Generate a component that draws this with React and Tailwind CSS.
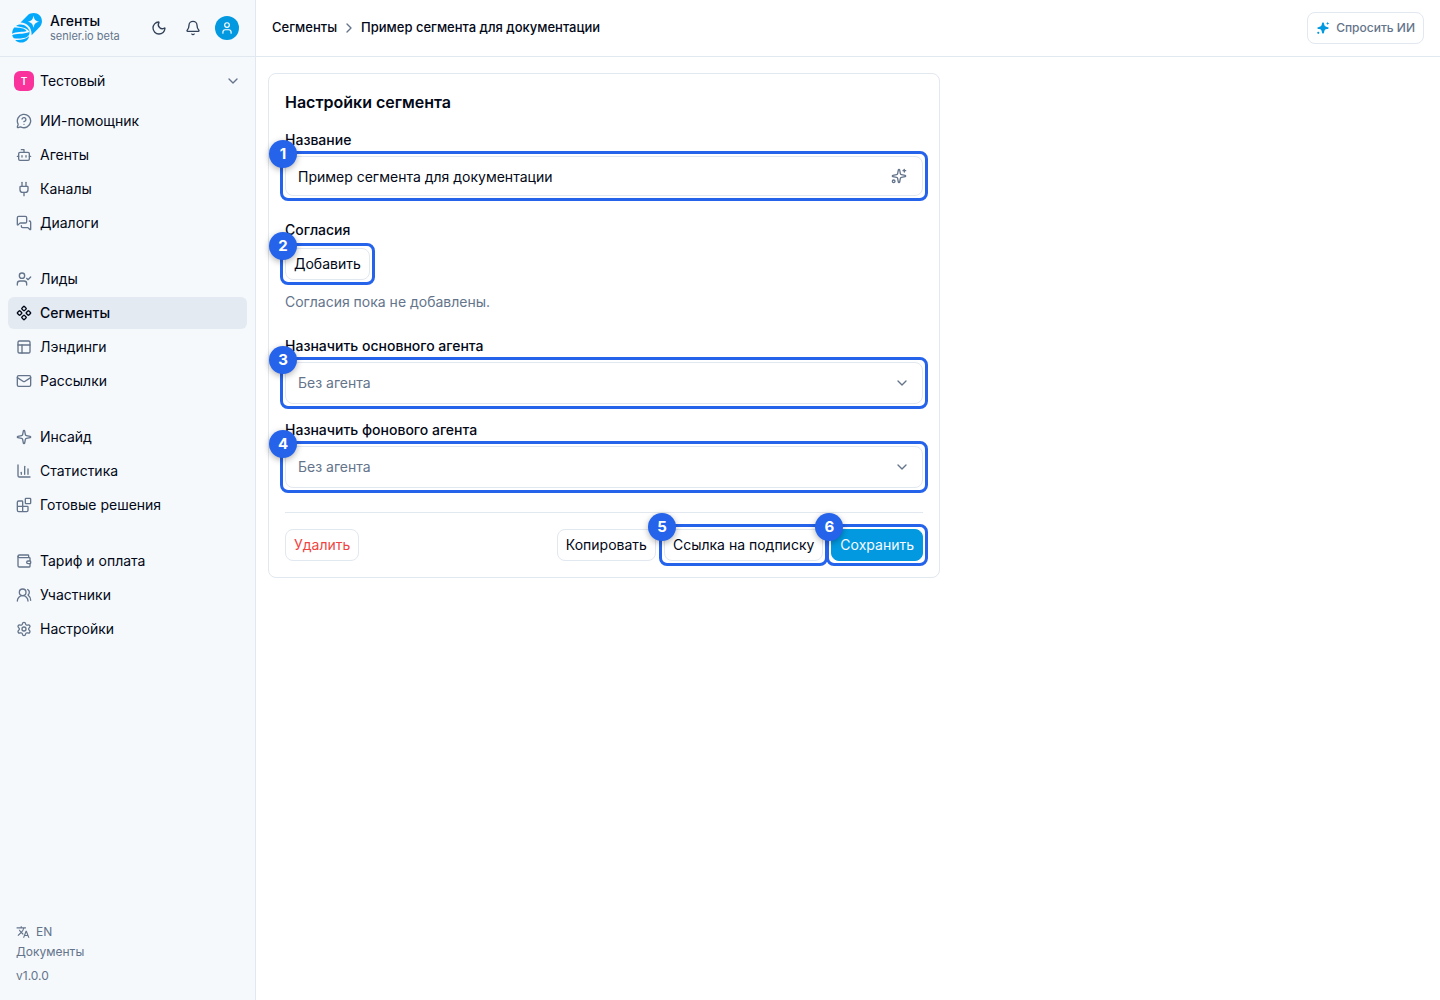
import { useState } from "react";
import {
  Bell,
  Blocks,
  Bot,
  ChartColumn,
  ChevronDown,
  ChevronRight,
  Component,
  Mail,
  MessageCircleQuestionMark,
  MessagesSquare,
  Moon,
  PanelsTopLeft,
  Plug,
  Settings,
  Sparkle,
  Sparkles,
  User,
  UserCheck,
  UsersRound,
  Wallet,
} from "lucide-react";
import { MdTranslate } from "react-icons/md";
import clsx from "clsx";

const menu = [
  [
    { title: "ИИ-помощник", icon: MessageCircleQuestionMark },
    { title: "Агенты", icon: Bot },
    { title: "Каналы", icon: Plug },
    { title: "Диалоги", icon: MessagesSquare },
  ],
  [
    { title: "Лиды", icon: UserCheck },
    { title: "Сегменты", icon: Component, active: true },
    { title: "Лэндинги", icon: PanelsTopLeft },
    { title: "Рассылки", icon: Mail },
  ],
  [
    { title: "Инсайд", icon: Sparkle },
    { title: "Статистика", icon: ChartColumn },
    { title: "Готовые решения", icon: Blocks },
  ],
  [
    { title: "Тариф и оплата", icon: Wallet },
    { title: "Участники", icon: UsersRound },
    { title: "Настройки", icon: Settings },
  ],
];

function Logo() {
  return (
    <svg viewBox="0 0 30 30" className="size-[30px] shrink-0" aria-hidden="true">
      <path
        fill="#05a9fc"
        d="M8.500 9.500 15.500 2.500C18.500-.5 24.500-.8 27.500 2.300c3.300 3.300 3.200 8.700.2 11.800L19.600 22.300C20 14.500 15.500 10 8.500 9.500Z"
      />
      <path
        fill="#f5f9fc"
        d="M21.500 2.800c.8 4 2 5.200 5.800 6-3.800.8-5 2-5.800 6-.8-4-2-5.200-5.800-6 3.800-.8 5-2 5.800-6Z"
      />
      <path fill="#05a9fc" d="M4 12.900C9.500 9.300 16.500 12.800 18 19.300c-2.600-4.200-7.500-5.200-14-6.400Z" />
      <path fill="#05a9fc" d="M2.200 14.600c5 .1 10.800.4 12.300 3.500-3.500 1.300-10.300.3-14.400 2.700.1-2.500.8-4.600 2.100-6.200Z" />
      <path fill="#05a9fc" d="M.2 22.300c3.500-2.400 11-.5 17.300-3.300.5 5.600-5.500 7-15.700 6.300C1 24.400.4 23.400.2 22.300Z" />
      <path fill="#05a9fc" d="M3.100 26.900c5.600.4 11.300-.8 14-3.600-1.300 6.300-9.300 8.600-14 3.600Z" />
    </svg>
  );
}

function AskIcon() {
  return (
    <svg viewBox="0 0 14 14" className="size-3.5 fill-[#0299e0]" aria-hidden="true">
      <path d="M7 1.500c.7 0 .9.400 1.100 1.500.4 2 .9 2.500 2.900 2.900 1.100.2 1.600.4 1.600 1.100s-.5.900-1.600 1.100c-2 .4-2.500.9-2.900 2.900-.2 1.100-.4 1.600-1.100 1.600s-.9-.5-1.100-1.600c-.4-2-.9-2.500-2.900-2.900C1.900 7.900 1.400 7.700 1.400 7s.5-.9 1.600-1.100c2-.4 2.500-.9 2.900-2.900.2-1.100.4-1.500 1.100-1.500Z" />
      <path d="M11.700.700 12.200 1.900 13.400 2.400 12.200 2.900 11.700 4.100 11.200 2.900 10 2.400 11.200 1.900Z" />
      <circle cx="2.300" cy="11.800" r="1.100" />
    </svg>
  );
}

// Обводка с номером шага поверх элемента
function Step({ number, className, children }) {
  return (
    <div className={clsx("relative", className)}>
      {children}
      <span className="pointer-events-none absolute -inset-[5px] rounded-lg border-3 border-[#2563eb]" />
      <span className="pointer-events-none absolute -top-4 -left-4 z-10 flex size-7 items-center justify-center rounded-full bg-[#2563eb] text-[15px] font-bold text-white shadow-[0_2px_6px_rgba(0,0,0,0.3)]">
        {number}
      </span>
    </div>
  );
}

function Button({ className, children }) {
  return (
    <button
      type="button"
      className={clsx("h-8 rounded-lg border px-2 text-sm whitespace-nowrap", className)}
    >
      {children}
    </button>
  );
}

function AgentSelect({ id, label, number }) {
  return (
    <div className="flex flex-col gap-1.5">
      <label htmlFor={id} className="text-sm font-medium">
        {label}
      </label>
      <Step number={number}>
        <select
          id={id}
          className="block h-[42px] w-full appearance-none rounded-lg border border-slate-200 bg-white px-3 text-sm text-[#64748b]"
        >
          <option>Без агента</option>
        </select>
        <ChevronDown className="pointer-events-none absolute top-[13px] right-[13px] size-4 text-[#64748b]" />
      </Step>
    </div>
  );
}

function Sidebar() {
  return (
    <aside className="flex w-64 shrink-0 flex-col border-r border-slate-200 bg-[#f5f9fc]">
      <div className="flex h-[57px] items-center border-b border-slate-200 pr-4 pl-3">
        <Logo />
        <div className="ml-2">
          <div className="text-sm leading-4 font-medium">Агенты</div>
          <div className="text-[11px] leading-[14px] text-[#64748b]">senler.io beta</div>
        </div>
        <div className="ml-auto flex items-center gap-[18px] text-slate-700">
          <button type="button" aria-label="Тема">
            <Moon className="size-4" />
          </button>
          <button type="button" aria-label="Уведомления">
            <Bell className="size-4" />
          </button>
          <button
            type="button"
            aria-label="Профиль"
            className="-ml-1 flex size-6 items-center justify-center rounded-full bg-[#0299e0] text-white"
          >
            <User className="size-3.5" />
          </button>
        </div>
      </div>

      <div className="p-2">
        <button type="button" className="flex h-8 w-full items-center gap-1.5 px-1.5 text-sm">
          <span className="flex size-5 items-center justify-center rounded-md bg-[#f9339b] text-[10px] font-semibold text-white">
            Т
          </span>
          Тестовый
          <ChevronDown className="ml-auto size-4 text-[#64748b]" />
        </button>
      </div>

      <nav className="flex flex-col gap-6 px-2">
        {menu.map((group, i) => (
          <ul key={i} className="flex flex-col gap-0.5">
            {group.map(({ title, icon: Icon, active }) => (
              <li key={title}>
                <a
                  href="#"
                  className={clsx(
                    "flex h-8 items-center gap-2 rounded-md px-2 text-sm",
                    active && "bg-[#e4eaf1] font-medium"
                  )}
                >
                  <Icon className={clsx("size-4", !active && "text-[#64748b]")} />
                  {title}
                </a>
              </li>
            ))}
          </ul>
        ))}
      </nav>

      <div className="mt-auto flex flex-col items-start px-4 pb-3.5 text-xs text-[#64748b]">
        <button type="button" className="flex h-5 items-center gap-1.5">
          <MdTranslate className="size-3.5" />
          EN
        </button>
        <a href="#" className="leading-5">
          Документы
        </a>
        <span className="mt-1 leading-5">v1.0.0</span>
      </div>
    </aside>
  );
}

export default function App() {
  const [name, setName] = useState("Пример сегмента для документации");

  return (
    <div className="flex min-h-screen bg-white font-['Inter',sans-serif] text-[#020817]">
      <Sidebar />

      <div className="min-w-0 flex-1">
        <header className="flex h-[57px] items-center justify-between border-b border-slate-200 px-4">
          <nav className="flex items-center gap-1 text-[13px] font-medium">
            <a href="#">Сегменты</a>
            <ChevronRight className="size-4 text-[#64748b]" />
            <span>Пример сегмента для документации</span>
          </nav>
          <button
            type="button"
            className="flex h-8 items-center gap-1.5 rounded-lg border border-slate-200 px-2 text-xs font-medium text-[#64748b]"
          >
            <AskIcon />
            Спросить ИИ
          </button>
        </header>

        <main className="px-3 py-4">
          <form className="max-w-2xl rounded-lg border border-slate-200 p-4">
            <h1 className="text-base font-semibold">Настройки сегмента</h1>

            <div className="mt-4 flex flex-col gap-1.5">
              <label htmlFor="name" className="text-sm font-medium">
                Название
              </label>
              <Step number={1}>
                <input
                  id="name"
                  value={name}
                  onChange={(e) => setName(e.target.value)}
                  className="block h-10 w-full rounded-lg border border-slate-200 pr-10 pl-3 text-sm"
                />
                <button
                  type="button"
                  aria-label="Сгенерировать"
                  className="absolute top-3 right-4 text-[#64748b]"
                >
                  <Sparkles className="size-4" />
                </button>
              </Step>
            </div>

            <div className="mt-6">
              <h2 className="text-sm font-medium">Согласия</h2>
              <Step number={2} className="mt-2 w-fit">
                <Button className="border-slate-200">Добавить</Button>
              </Step>
              <p className="mt-3 text-sm text-[#64748b]">Согласия пока не добавлены.</p>
            </div>

            <div className="mt-6 flex flex-col gap-4">
              <AgentSelect id="main-agent" label="Назначить основного агента" number={3} />
              <AgentSelect id="background-agent" label="Назначить фонового агента" number={4} />
            </div>

            <div className="mt-6 flex gap-2 border-t border-slate-200 pt-4">
              <Button className="mr-auto border-slate-200 text-[#ef4444]">Удалить</Button>
              <Button className="border-slate-200">Копировать</Button>
              <Step number={5}>
                <Button className="border-slate-200">Ссылка на подписку</Button>
              </Step>
              <Step number={6}>
                <Button className="border-[#0299e0] bg-[#0299e0] text-slate-50">Сохранить</Button>
              </Step>
            </div>
          </form>
        </main>
      </div>
    </div>
  );
}
